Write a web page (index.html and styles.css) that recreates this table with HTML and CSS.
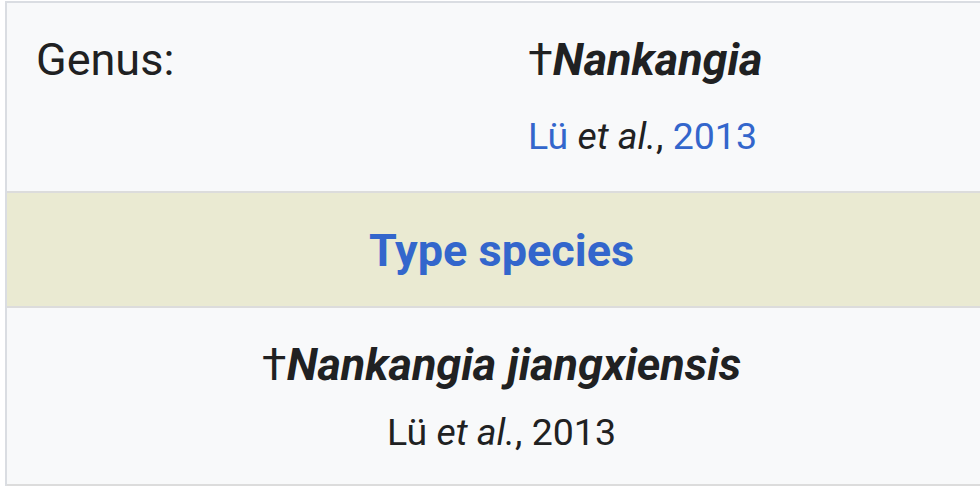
FILE: index.html
```html
<!DOCTYPE html>
<html lang="en">
<head>
<meta charset="utf-8">
<title>Nankangia</title>
<link rel="stylesheet" href="styles.css">
</head>
<body>
<div class="page">
  <table class="taxobox">
    <colgroup>
      <col class="col-label">
      <col class="col-value">
    </colgroup>
    <tr class="genus-row">
      <td class="label">Genus:</td>
      <td class="value">
        <div class="name">†<b><i>Nankangia</i></b></div>
        <div class="authority authority-genus"><a href="#">Lü</a> <i>et al.</i>, <a href="#">2013</a></div>
      </td>
    </tr>
    <tr class="section-row">
      <th colspan="2" class="section"><a href="#">Type species</a></th>
    </tr>
    <tr class="species-row">
      <td colspan="2" class="species">
        <div class="name">†<b><i>Nankangia jiangxiensis</i></b></div>
        <div class="authority authority-species">Lü <i>et al.</i>, 2013</div>
      </td>
    </tr>
  </table>
</div>
</body>
</html>
```

FILE: styles.css
```css
html, body {
  margin: 0;
  padding: 0;
  background: #ffffff;
  overflow: hidden;
}

body {
  font-family: Roboto, "Noto Sans", "Liberation Sans", sans-serif;
  font-size: 45px;
  color: #202122;
}

.page {
  padding: 1px 0 0 5px;
  width: 1200px;
}

.taxobox {
  width: 991px;
  border-collapse: separate;
  border-spacing: 0;
  table-layout: fixed;
  background: #f8f9fa;
  border-top: 2px solid #dadde2;
  border-left: 2px solid #dadde2;
}

.col-label { width: 521px; }

.taxobox td,
.taxobox th {
  padding: 0;
  vertical-align: top;
  border-bottom: 2px solid #dcdcdc;
}

.taxobox a {
  color: #3366cc;
  text-decoration: none;
}

.label {
  padding: 24px 0 0 29px !important;
  line-height: 66px;
}

.value {
  padding: 24px 0 27px 0 !important;
}

.name {
  line-height: 66px;
  white-space: nowrap;
}

.authority {
  font-size: 37.5px;
  line-height: 56px;
  white-space: nowrap;
}

.authority-genus { margin-top: 15px; }

.section {
  background: #eaead2;
  text-align: center;
  font-weight: 700;
  line-height: 66px;
  padding: 25px 0 22px 0 !important;
}

.species {
  text-align: center;
  padding: 24px 0 24px 0 !important;
}

.authority-species { margin-top: 6px; }
```
